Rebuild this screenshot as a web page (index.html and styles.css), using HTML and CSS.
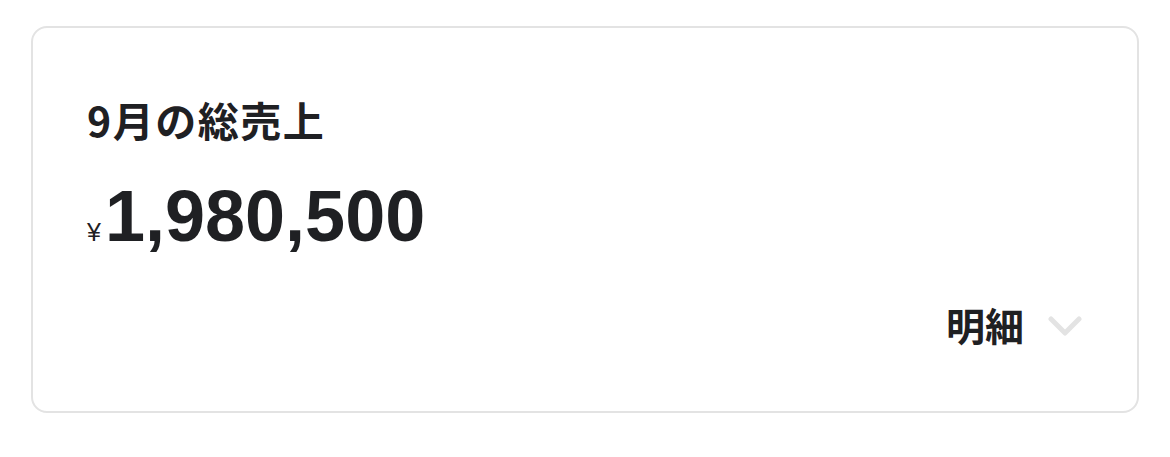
FILE: index.html
```html
<!DOCTYPE html>
<html lang="ja">
<head>
    <meta charset="UTF-8">
    <meta name="viewport" content="width=device-width, initial-scale=1.0">
    <title>9月の総売上</title>
    <link rel="stylesheet" href="styles.css">
</head>
<body>

    <div class="page">
        <div class="card">
            <h2 class="card-title">9月の総売上</h2>
            <p class="amount"><span class="yen">¥</span>1,980,500</p>
            <div class="card-footer">
                <button class="detail-btn" type="button">
                    明細
                    <svg class="chevron" width="34" height="21" viewBox="0 0 34 21">
                        <path d="M3 3 L17 17 L31 3" fill="none" stroke="#e3e3e3" stroke-width="5" stroke-linecap="round" stroke-linejoin="round"/>
                    </svg>
                </button>
            </div>
        </div>
    </div>

</body>
</html>
```

FILE: styles.css
```css
body {
    margin: 0;
    background: #ffffff;
    font-family: "Noto Sans CJK JP", "Liberation Sans", sans-serif;
    color: #1f2023;
}
.page {
    padding: 26px 31px;
}
.card {
    height: 387px;
    box-sizing: border-box;
    border: 2px solid #e3e3e3;
    border-radius: 16px;
    padding: 67px 55px 0 54px;
    background: #fff;
}
.card-title {
    margin: 0;
    font-size: 41px;
    font-weight: bold;
    line-height: 48px;
    letter-spacing: 1.5px;
}
.amount {
    margin: 33px 0 0;
    font-family: "Liberation Sans", sans-serif;
    font-size: 72px;
    font-weight: bold;
    line-height: 80px;
}
.yen {
    font-size: 25px;
    font-weight: normal;
    margin-right: 4px;
}
.card-footer {
    display: flex;
    justify-content: flex-end;
    margin-top: 30px;
}
.detail-btn {
    display: flex;
    align-items: center;
    gap: 24px;
    padding: 0;
    border: none;
    background: none;
    font-family: "Noto Sans CJK JP", sans-serif;
    font-size: 39px;
    font-weight: bold;
    color: #1f2023;
    line-height: 44px;
    cursor: pointer;
}
.chevron {
    margin-top: 4px;
}
```
